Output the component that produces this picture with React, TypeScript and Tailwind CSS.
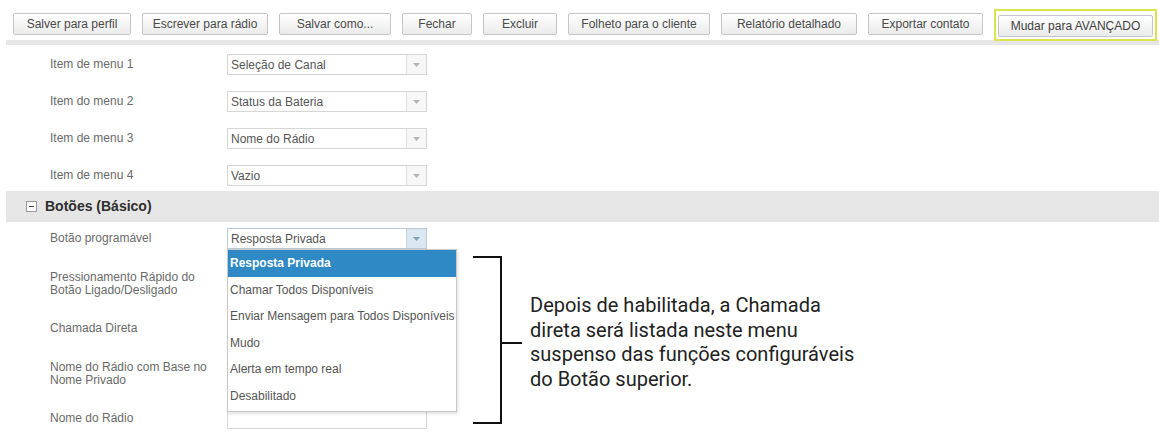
import React from "react";

const FONT = { fontFamily: '"Liberation Sans", Arial, sans-serif' };

const toolbar: { label: string; w: number }[] = [
  { label: "Salver para perfil", w: 118 },
  { label: "Escrever para rádio", w: 126 },
  { label: "Salvar como...", w: 112 },
  { label: "Fechar", w: 70 },
  { label: "Excluir", w: 74 },
  { label: "Folheto para o cliente", w: 142 },
  { label: "Relatório detalhado", w: 136 },
  { label: "Exportar contato", w: 115 },
];

const menuRows = [
  { label: "Item de menu 1", value: "Seleção de Canal" },
  { label: "Item do menu 2", value: "Status da Bateria" },
  { label: "Item de menu 3", value: "Nome do Rádio" },
  { label: "Item de menu 4", value: "Vazio" },
];

const options = [
  "Resposta Privada",
  "Chamar Todos Disponíveis",
  "Enviar Mensagem para Todos Disponíveis",
  "Mudo",
  "Alerta em tempo real",
  "Desabilitado",
];

function Caret({ active }: { active?: boolean }) {
  return (
    <svg width="7" height="4" viewBox="0 0 7 4">
      <path d="M0 0h7L3.5 4z" fill={active ? "#7f9fbb" : "#b5b5b5"} />
    </svg>
  );
}

function Select({ value, active }: { value: string; active?: boolean }) {
  return (
    <div
      className={`flex h-[21px] w-[200px] items-stretch border bg-white ${
        active ? "border-[#b9c9d6]" : "border-[#d6d6d6]"
      }`}
    >
      <div className="flex flex-1 items-center pl-[3px] text-[12px] text-[#555]">{value}</div>
      <div
        className={`flex w-[20px] items-center justify-center border-l ${
          active ? "border-[#c3d3e0] bg-[#dbe7f1]" : "border-[#e2e2e2] bg-[#f7f7f7]"
        }`}
      >
        <Caret active={active} />
      </div>
    </div>
  );
}

function TextBox() {
  return <div className="h-[21px] w-[200px] border border-[#d6d6d6] bg-white" />;
}

function Row({
  label,
  children,
}: {
  label: React.ReactNode;
  children?: React.ReactNode;
}) {
  return (
    <div className="flex h-[21px] items-center">
      <div className="w-[177px] text-[12px] leading-[13px] text-[#6a6a6a]">{label}</div>
      {children}
    </div>
  );
}

export default function App() {
  return (
    <div className="h-[435px] w-[1159px] overflow-hidden bg-white" style={FONT}>
      {/* top toolbar */}
      <div className="flex h-[40px] items-start gap-[11px] pl-[13px] pt-[13px]">
        {toolbar.map((b) => (
          <button
            key={b.label}
            style={{ width: b.w }}
            className="h-[22px] rounded-[2px] border border-[#c6c6c6] bg-gradient-to-b from-white to-[#ebebeb] text-[12px] text-[#4a4a4a]"
          >
            {b.label}
          </button>
        ))}
        <div className="-mt-[4px] border-2 border-[#dbe34e] p-[2px]">
          <button className="h-[22px] w-[155px] rounded-[2px] border border-[#c6c6c6] bg-gradient-to-b from-white to-[#ebebeb] text-[12px] text-[#3f3f3f]">
            Mudar para AVANÇADO
          </button>
        </div>
      </div>

      {/* tail of the previous section header */}
      <div className="ml-[6px] h-[5px] bg-[#e6e6e6]" />

      {/* menu items */}
      <div className="flex flex-col gap-[16px] pb-[5px] pl-[50px] pt-[9px]">
        {menuRows.map((r) => (
          <Row key={r.label} label={r.label}>
            <Select value={r.value} />
          </Row>
        ))}
      </div>

      {/* section header */}
      <div className="ml-[6px] flex h-[31px] items-center bg-[#e6e6e6] pl-[20px]">
        <div className="flex h-[11px] w-[11px] items-center justify-center border border-[#9a9a9a] bg-white">
          <div className="h-[1px] w-[5px] bg-[#444]" />
        </div>
        <span className="ml-[8px] text-[14px] font-bold text-[#2e2e2e]">Botões (Básico)</span>
      </div>

      {/* section body */}
      <div className="flex">
        <div className="relative flex w-[473px] flex-col gap-[24px] pl-[50px] pt-[6px]">
          <Row label="Botão programável">
            <div className="relative">
              <Select value="Resposta Privada" active />
              {/* open option list */}
              <div className="absolute left-0 top-[21px] z-10 w-[230px] border border-[#c9c9c9] bg-white pb-[2px] shadow-[1px_2px_3px_rgba(0,0,0,0.12)]">
                {options.map((o, i) => (
                  <div
                    key={o}
                    className={`flex h-[26.5px] items-center whitespace-nowrap pl-[2px] text-[12px] ${
                      i === 0 ? "bg-[#2f89c5] font-bold text-white" : "text-[#555]"
                    }`}
                  >
                    {o}
                  </div>
                ))}
              </div>
            </div>
          </Row>
          <Row
            label={
              <>
                Pressionamento Rápido do
                <br />
                Botão Ligado/Desligado
              </>
            }
          >
            <Select value="" />
          </Row>
          <Row label="Chamada Direta">
            <Select value="" />
          </Row>
          <Row
            label={
              <>
                Nome do Rádio com Base no
                <br />
                Nome Privado
              </>
            }
          >
            <Select value="" />
          </Row>
          <Row label="Nome do Rádio">
            <TextBox />
          </Row>
        </div>

        {/* annotation */}
        <div className="mt-[34px] flex items-center self-start">
          <div className="h-[168px] w-[29px] border-y-2 border-r-2 border-[#111]" />
          <div className="mt-[6px] h-[2px] w-[20px] bg-[#111]" />
          <div
            className="ml-[8px] mt-[4px] text-[20px] leading-[24.5px] text-[#222]"
            style={{ fontFamily: "Roboto, sans-serif" }}
          >
            Depois de habilitada, a Chamada
            <br />
            direta será listada neste menu
            <br />
            suspenso das funções configuráveis
            <br />
            do Botão superior.
          </div>
        </div>
      </div>
    </div>
  );
}
